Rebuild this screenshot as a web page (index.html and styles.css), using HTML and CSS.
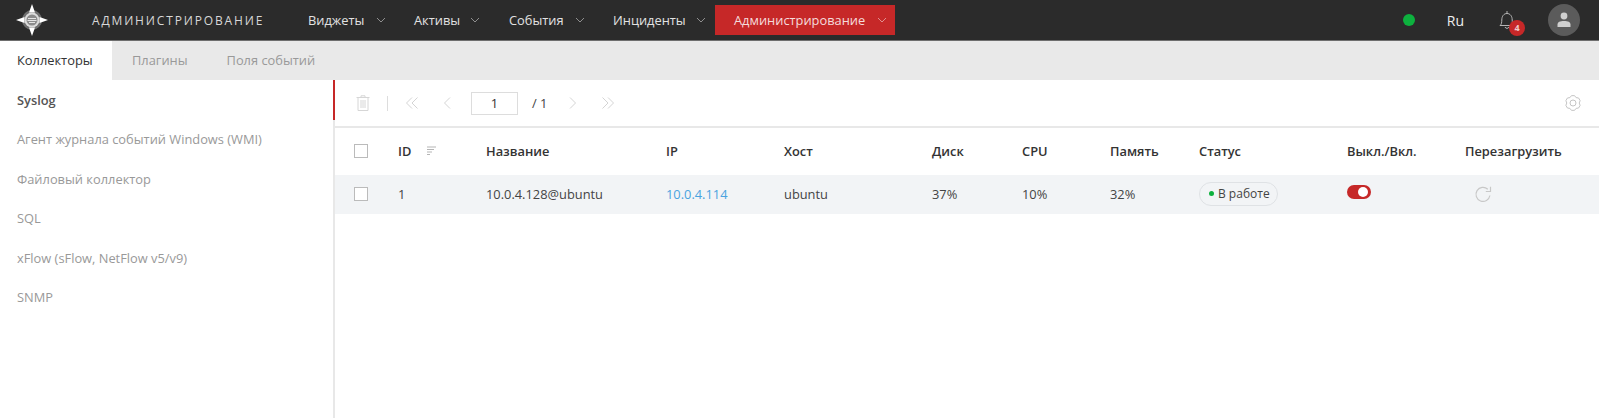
FILE: index.html
```html
<!DOCTYPE html>
<html lang="ru">
<head>
<meta charset="utf-8">
<title>Администрирование</title>
<link rel="stylesheet" href="styles.css">
</head>
<body>
<header class="topbar">
  <svg class="logo" width="32" height="32" viewBox="0 0 32 32">
    <circle cx="16" cy="16" r="10" fill="#6f6f6f"/>
    <path d="M16 0l3 8.500h-6zM16 32l-3-8.500h6zM0 16l8.500-3v6zM32 16l-8.500 3v-6z" fill="#fff"/>
    <circle cx="16" cy="16" r="7.500" fill="#dcdcdc"/>
    <circle cx="16" cy="16" r="5.500" fill="#8c8c8c"/>
    <path d="M12 14.500h8M11.500 16.500h9M13 18.500h6" stroke="#e4e4e4" stroke-width="1"/>
  </svg>
  <div class="app-title">АДМИНИСТРИРОВАНИЕ</div>
  <nav class="mainnav">
    <a class="nav-item nav-w1">Виджеты<svg class="chev" width="10" height="6" viewBox="0 0 10 6"><path d="M1 1l4 4 4-4"/></svg></a>
    <a class="nav-item nav-w2">Активы<svg class="chev" width="10" height="6" viewBox="0 0 10 6"><path d="M1 1l4 4 4-4"/></svg></a>
    <a class="nav-item nav-w3">События<svg class="chev" width="10" height="6" viewBox="0 0 10 6"><path d="M1 1l4 4 4-4"/></svg></a>
    <a class="nav-item nav-w4">Инциденты<svg class="chev" width="10" height="6" viewBox="0 0 10 6"><path d="M1 1l4 4 4-4"/></svg></a>
    <a class="nav-item nav-active">Администрирование<svg class="chev" width="10" height="6" viewBox="0 0 10 6"><path d="M1 1l4 4 4-4"/></svg></a>
  </nav>
  <div class="top-right">
    <span class="status-dot"></span>
    <span class="lang">Ru</span>
    <div class="bell">
      <svg width="18" height="20" viewBox="0 0 18 20"><path d="M9 1v2.500M2 15.500c1.500-1.200 1.800-3 1.800-5.500 0-3.800 2-6.500 5.200-6.500s5.200 2.700 5.200 6.500c0 2.500.3 4.300 1.800 5.500zM7 17c.4 1.800 3.600 1.800 4 0" fill="none" stroke="#b5b5b5" stroke-width="1"/></svg>
      <span class="badge">4</span>
    </div>
    <div class="avatar">
      <svg width="14" height="16" viewBox="0 0 14 16"><circle cx="7" cy="4" r="3.400" fill="#cfcfcf"/><path d="M0.500 15v-2.500c0-2.500 2.500-3.500 6.500-3.500s6.500 1 6.500 3.500V15z" fill="#cfcfcf"/></svg>
    </div>
  </div>
</header>

<div class="tabs">
  <a class="tab tab-active">Коллекторы</a>
  <a class="tab">Плагины</a>
  <a class="tab">Поля событий</a>
</div>

<div class="content">
  <aside class="sidebar">
    <a class="side-item side-active">Syslog</a>
    <a class="side-item">Агент журнала событий Windows (WMI)</a>
    <a class="side-item">Файловый коллектор</a>
    <a class="side-item">SQL</a>
    <a class="side-item">xFlow (sFlow, NetFlow v5/v9)</a>
    <a class="side-item">SNMP</a>
  </aside>
  <main class="main">
    <div class="toolbar">
      <svg class="ic-trash" width="14" height="16" viewBox="0 0 14 16"><path d="M0.500 2.500h13M5 2.500V.8h4v1.700M2 2.500V15.500h10V2.500M5 5v8M7 5v8M9 5v8" fill="none" stroke="#d6d6d6"/></svg>
      <span class="tool-sep"></span>
      <svg class="ic-first" width="14" height="12" viewBox="0 0 14 12"><path d="M7 .5L1.500 6 7 11.500M12.500 .5L7 6l5.500 5.500" fill="none" stroke="#d4d4d4"/></svg>
      <svg class="ic-prev" width="8" height="12" viewBox="0 0 8 12"><path d="M7 .5L1.500 6 7 11.500" fill="none" stroke="#d4d4d4"/></svg>
      <div class="page-input">1</div>
      <span class="page-total">/ 1</span>
      <svg class="ic-next" width="8" height="12" viewBox="0 0 8 12"><path d="M1 .5L6.500 6 1 11.500" fill="none" stroke="#d4d4d4"/></svg>
      <svg class="ic-last" width="14" height="12" viewBox="0 0 14 12"><path d="M1.500 .5L7 6l-5.500 5.500M7 .5L12.500 6 7 11.500" fill="none" stroke="#d4d4d4"/></svg>
      <svg class="ic-gear" width="16" height="16" viewBox="0 0 16 16"><path d="M6.440 .66L9.560 .66 11.100 2.630 13.570 2.980 15.130 5.680 14.200 8 15.130 10.320 13.570 13.020 11.100 13.370 9.560 15.340 6.440 15.340 4.900 13.370 2.430 13.020 .87 10.320 1.800 8 .87 5.680 2.430 2.980 4.900 2.630z" fill="none" stroke="#c4c4c4" stroke-linejoin="round"/><circle cx="8" cy="8" r="3" fill="none" stroke="#c4c4c4"/></svg>
    </div>
    <div class="grid-row grid-head">
      <span class="check"></span>
      <span class="id-head">ID<svg width="9" height="10" viewBox="0 0 9 10"><path d="M0 1h9M0 3.500h7M0 6h5M0 8.500h3" stroke="#b5b5b5"/></svg></span>
      <span>Название</span>
      <span>IP</span>
      <span>Хост</span>
      <span>Диск</span>
      <span>CPU</span>
      <span>Память</span>
      <span>Статус</span>
      <span>Выкл./Вкл.</span>
      <span>Перезагрузить</span>
    </div>
    <div class="grid-row grid-data">
      <span class="check"></span>
      <span>1</span>
      <span>10.0.4.128@ubuntu</span>
      <a class="ip-link">10.0.4.114</a>
      <span>ubuntu</span>
      <span>37%</span>
      <span>10%</span>
      <span>32%</span>
      <span><span class="pill"><i class="pill-dot"></i>В работе</span></span>
      <span class="toggle"><i class="knob"></i></span>
      <svg class="ic-reload" width="18" height="18" viewBox="0 0 18 18"><path d="M13.800 3.300A7 7 0 1 0 15.900 9.500" fill="none" stroke="#c8c8c8" stroke-width="1.200"/><path d="M16.500 .8v4.700h-4.700" fill="none" stroke="#c8c8c8" stroke-width="1.200"/></svg>
    </div>
  </main>
</div>
</body>
</html>
```
FILE: styles.css
```css
* { box-sizing: border-box; }
html, body { margin: 0; height: 100%; }
body {
  font-family: "Open Sans", "Liberation Sans", sans-serif;
  font-size: 12.85px;
  color: #333;
  background: #fff;
  display: flex;
  flex-direction: column;
  height: 418px;
  overflow: hidden;
}
.topbar {
  flex: none;
  height: 41px;
  background: #2b2b2b;
  border-bottom: 1px solid #6e6e6e;
  display: flex;
  align-items: center;
  padding-left: 16px;
}
.logo { flex: none; margin-right: 44px; }
.app-title {
  width: 216px;
  color: #d8d8d8;
  font-size: 12px;
  letter-spacing: 1.85px;
  white-space: nowrap;
}
.mainnav { display: flex; align-items: center; height: 30px; }
.nav-item {
  display: flex;
  align-items: center;
  justify-content: space-between;
  color: #e2e2e2;
  white-space: nowrap;
  height: 30px;
}
.nav-w1 { width: 78px; margin-right: 28px; }
.nav-w2 { width: 66px; margin-right: 29px; }
.nav-w3 { width: 76px; margin-right: 28px; }
.nav-w4 { width: 93px; margin-right: 9px; }
.nav-active {
  width: 180px;
  background: #c62828;
  color: #f4dcdc;
  padding: 0 8px 0 19px;
}
.chev { fill: none; stroke: #8f8f8f; stroke-width: 1; flex: none; }
.nav-active .chev { stroke: #e08f8f; }
.top-right {
  margin-left: auto;
  display: flex;
  align-items: center;
  padding-right: 19px;
}
.status-dot {
  width: 12px;
  height: 12px;
  border-radius: 50%;
  background: #0db13e;
  margin-right: 32px;
}
.lang { color: #eee; font-size: 14px; margin-right: 34px; }
.bell { position: relative; width: 18px; height: 20px; margin-right: 32px; }
.bell svg { display: block; }
.badge {
  position: absolute;
  left: 11px;
  top: 10px;
  width: 16px;
  height: 16px;
  border-radius: 50%;
  background: #c62828;
  color: #f1c9c9;
  font-size: 9px;
  font-weight: 700;
  line-height: 16px;
  text-align: center;
}
.avatar {
  width: 32px;
  height: 32px;
  border-radius: 50%;
  background: #5b5b5b;
  display: flex;
  align-items: center;
  justify-content: center;
}
.tabs {
  flex: none;
  height: 39px;
  background: #e9e9e9;
  display: flex;
}
.tab {
  color: #999;
  display: flex;
  align-items: center;
  padding: 0 19px 2px 20px;
  white-space: nowrap;
}
.tab-active {
  width: 112px;
  background: #fff;
  color: #333;
  padding: 0 0 2px 17px;
}
.content { flex: 1; display: flex; min-height: 0; }
.sidebar {
  flex: none;
  width: 333px;
}
.side-item {
  display: flex;
  align-items: center;
  height: 39.5px;
  padding-left: 17px;
  color: #999;
  white-space: nowrap;
}
.side-active { color: #555; font-weight: 600; }
.main {
  flex: 1;
  min-width: 0;
  border-left: 2px solid #e8e8e8;
  position: relative;
}
.main::before {
  content: "";
  position: absolute;
  left: -2px;
  top: 0;
  width: 2px;
  height: 40px;
  background: #c62828;
}
.toolbar {
  height: 48px;
  border-bottom: 2px solid #e8e8e8;
  display: flex;
  align-items: center;
  padding: 0 18px 0 21px;
}
.ic-trash { margin-right: 17px; }
.tool-sep { width: 1px; height: 15px; background: #ddd; margin-right: 17px; }
.ic-first { margin-right: 24px; }
.ic-prev { margin-right: 20px; }
.page-input {
  width: 47px;
  height: 23px;
  border: 1px solid #ddd;
  text-align: center;
  line-height: 21px;
  color: #333;
  margin-right: 14px;
}
.page-total { width: 35px; margin-right: 2px; color: #444; white-space: nowrap; }
.ic-next { margin-right: 24px; }
.ic-gear { margin-left: auto; }
.grid-row {
  display: grid;
  grid-template-columns: 44px 88px 180px 118px 148px 90px 88px 89px 148px 118px 1fr;
  align-items: center;
  padding-left: 19px;
  padding-bottom: 2px;
  white-space: nowrap;
}
.grid-head { height: 47px; font-weight: 600; color: #333; }
.grid-data { height: 39px; background: #f2f4f6; color: #444; }
.check {
  display: block;
  width: 14px;
  height: 14px;
  border: 1px solid #bbb;
  background: #fff;
}
.id-head { display: flex; align-items: center; gap: 16px; }
.ip-link { color: #4aa3df; }
.pill {
  display: inline-flex;
  align-items: center;
  height: 24px;
  width: 79px;
  padding-left: 9px;
  border: 1px solid #dfe2e5;
  border-radius: 12px;
  font-size: 12px;
}
.pill-dot {
  width: 5px;
  height: 5px;
  border-radius: 50%;
  background: #0db13e;
  margin-right: 4px;
}
.toggle {
  display: block;
  position: relative;
  width: 24px;
  height: 14px;
  border-radius: 7px;
  background: #c62828;
  margin-top: -3px;
}
.knob {
  position: absolute;
  right: 3px;
  top: 2px;
  width: 10px;
  height: 10px;
  border-radius: 50%;
  background: #fff;
}
.ic-reload { margin: 2px 0 0 9px; }
```
